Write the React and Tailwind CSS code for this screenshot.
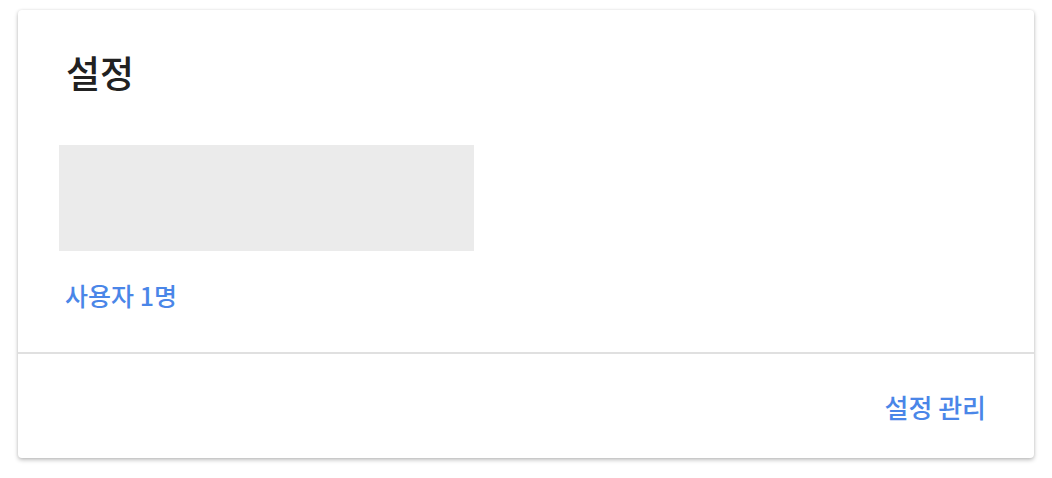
export default function App() {
  return (
    <div className="w-[1052px] h-[478px] bg-white pt-[10px] px-[18px]" style={{ fontFamily: '"Noto Sans CJK KR", Roboto, sans-serif' }}>
      <div className="bg-white rounded-[4px] shadow-[0_2px_4px_rgba(0,0,0,0.25),0_0_3px_rgba(0,0,0,0.08)] h-[448px] flex flex-col">
        <div className="px-[41px] pt-[38px] h-[342px] flex flex-col">
          <div className="text-[37px] leading-[48px] text-[#212121] font-medium pl-[7px]">설정</div>
          <div className="mt-[49px] w-[415px] h-[106px] bg-[#ebebeb]"></div>
          <div className="mt-[28px] pl-[6px] text-[25px] leading-[32px] text-[#4a86e8] font-medium">사용자 1명</div>
        </div>
        <div className="h-[2px] bg-[#e0e0e0]"></div>
        <div className="flex-1 flex items-center justify-end pr-[48px]">
          <span className="text-[26px] text-[#4a86e8] font-medium">설정 관리</span>
        </div>
      </div>
    </div>
  );
}
